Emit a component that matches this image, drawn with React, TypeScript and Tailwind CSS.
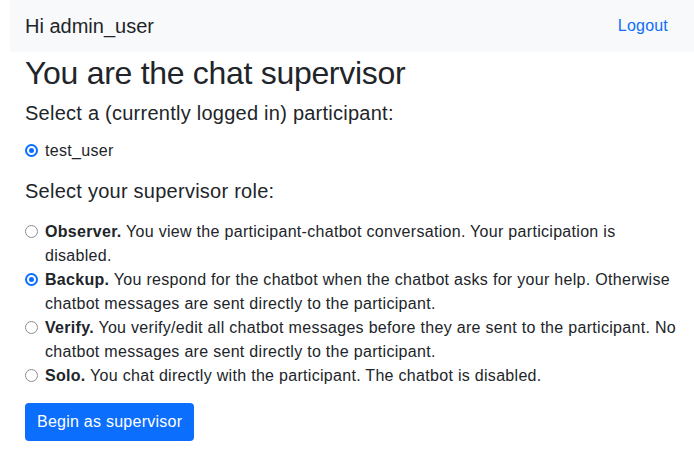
import React from "react";

function Radio({ checked }: { checked?: boolean }) {
  if (checked) {
    return (
      <span className="mt-[5px] mr-[7px] flex h-[13px] w-[13px] shrink-0 items-center justify-center rounded-full border-[2px] border-[#0a6efd] bg-white">
        <span className="h-[5px] w-[5px] rounded-full bg-[#0a6efd]" />
      </span>
    );
  }
  return (
    <span className="mt-[5px] mr-[7px] h-[13px] w-[13px] shrink-0 rounded-full border border-[#8d8d92] bg-white" />
  );
}

const roles = [
  {
    name: "Observer.",
    text: "You view the participant-chatbot conversation. Your participation is disabled.",
    checked: false,
  },
  {
    name: "Backup.",
    text: "You respond for the chatbot when the chatbot asks for your help. Otherwise chatbot messages are sent directly to the participant.",
    checked: true,
  },
  {
    name: "Verify.",
    text: "You verify/edit all chatbot messages before they are sent to the participant. No chatbot messages are sent directly to the participant.",
    checked: false,
  },
  {
    name: "Solo.",
    text: "You chat directly with the participant. The chatbot is disabled.",
    checked: false,
  },
];

export default function App() {
  return (
    <div
      className="min-h-[470px] w-[694px] bg-white text-[#212529]"
      style={{ fontFamily: '"Liberation Sans", Arial, sans-serif' }}
    >
      <nav className="ml-[10px] flex h-[52px] items-center justify-between bg-[#f8f9fa] pl-[15px] pr-[26px]">
        <span className="text-[20px] leading-[30px]">Hi admin_user</span>
        <a className="text-[16px] tracking-[0.2px] text-[#0d6efd]" href="#">
          Logout
        </a>
      </nav>
      <main className="pl-[25px] pr-[14px]">
        <h1 className="mt-[2px] text-[32px] font-medium leading-[38px] tracking-[-0.3px]">
          You are the chat supervisor
        </h1>
        <h5 className="mt-[9px] text-[20px] font-medium leading-[24px] tracking-[0.25px]">
          Select a (currently logged in) participant:
        </h5>
        <label className="mt-[14px] flex text-[16px] leading-[24px] tracking-[0.3px]">
          <Radio checked />
          <span>test_user</span>
        </label>
        <h5 className="mt-[16px] text-[20px] font-medium leading-[24px] tracking-[0.25px]">
          Select your supervisor role:
        </h5>
        <div className="mt-[17px] flex flex-col">
          {roles.map((r) => (
            <label key={r.name} className="flex text-[16px] leading-[24px] tracking-[0.3px]">
              <Radio checked={r.checked} />
              <span>
                <b className="font-bold">{r.name}</b> {r.text}
              </span>
            </label>
          ))}
        </div>
        <button className="mt-[15px] h-[38px] rounded-[4px] bg-[#0b6efd] px-[12px] text-[16px] leading-[24px] tracking-[0.25px] text-white">
          Begin as supervisor
        </button>
      </main>
    </div>
  );
}
